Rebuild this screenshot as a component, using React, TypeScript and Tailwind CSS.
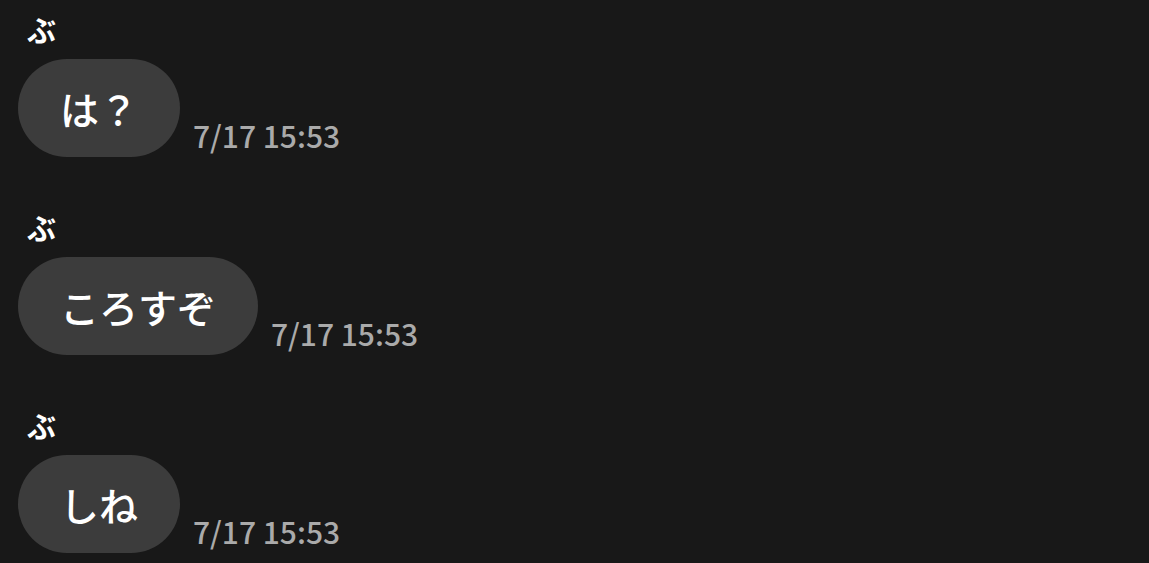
import React from "react";

const messages = [
  { name: "ぶ", text: "は？", time: "7/17 15:53" },
  { name: "ぶ", text: "ころすぞ", time: "7/17 15:53" },
  { name: "ぶ", text: "しね", time: "7/17 15:53" },
];

export default function App() {
  return (
    <div
      className="w-[1149px] h-[563px] overflow-hidden bg-[#181818] pt-[13px] pl-[18px]"
      style={{ fontFamily: '"Noto Sans CJK JP", "Noto Sans", sans-serif' }}
    >
      <div className="flex flex-col gap-[54px]">
        {messages.map((m, i) => (
          <div key={i} className="flex flex-col">
            <div className="pl-[9px] text-[29px] leading-[32px] font-bold text-white">{m.name}</div>
            <div className="mt-[14px] flex items-end">
              <div className="rounded-full bg-[#3c3c3c] px-[42px] py-[20px] text-[39px] leading-[58px] font-medium text-white">
                {m.text}
              </div>
              <div className="ml-[13px] mb-[4px] text-[30px] leading-[36px] font-medium text-[#aaaaaa]">{m.time}</div>
            </div>
          </div>
        ))}
      </div>
    </div>
  );
}
